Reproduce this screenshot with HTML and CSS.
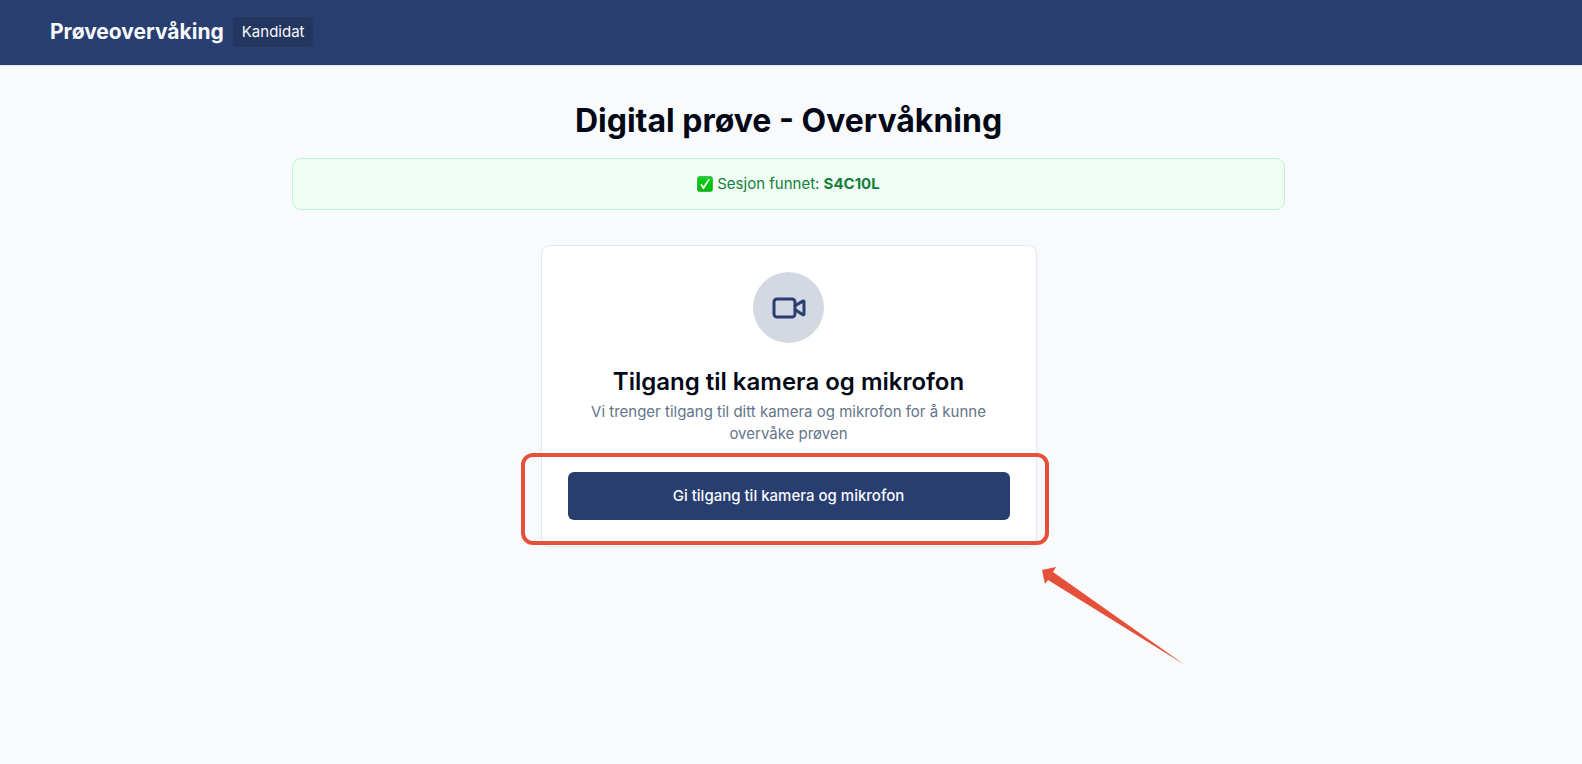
FILE: index.html
```html
<!DOCTYPE html>
<html lang="no">
<head>
  <meta charset="UTF-8">
  <title>Prøveovervåking</title>
  <meta name="viewport" content="width=device-width, initial-scale=1.0">
  <link rel="stylesheet" href="styles.css">
</head>
<body>
<header class="topbar">
  <a class="brand" href="#">Prøveovervåking</a>
  <span class="badge">Kandidat</span>
</header>

<main class="content">
  <h1 class="title">Digital prøve - Overvåkning</h1>

  <div class="alert">
    <svg class="check" viewBox="0 0 16 16" aria-hidden="true">
      <defs>
        <linearGradient id="green" x1="0" y1="0" x2="0" y2="1">
          <stop offset="0" stop-color="#25d33c"/>
          <stop offset="0.3" stop-color="#00c90b"/>
          <stop offset="1" stop-color="#00b90a"/>
        </linearGradient>
      </defs>
      <rect x="0.5" y="0.5" width="15" height="15" rx="2" fill="url(#green)" stroke="#1d9e2b" stroke-width="0.6"/>
      <path d="M3.2 8.6 4.7 7.8 6.5 10.3 11.4 2.9 12.9 3.2 6.9 13.2 6.1 13.2Z" fill="#fff"/>
    </svg>
    <p>Sesjon funnet: <strong>S4C10L</strong></p>
  </div>

  <section class="card">
    <div class="icon-circle">
      <svg class="video" viewBox="0 0 24 24" aria-hidden="true">
        <path d="m16 13 5.223 3.482a.5.5 0 0 0 .777-.416V7.870a.5.5 0 0 0-.752-.432L16 10.500"/>
        <rect x="2" y="6" width="14" height="12" rx="2"/>
      </svg>
    </div>
    <h2 class="card-title">Tilgang til kamera og mikrofon</h2>
    <p class="card-text">Vi trenger tilgang til ditt kamera og mikrofon for å kunne overvåke prøven</p>
    <div class="action">
      <button class="btn" type="button">Gi tilgang til kamera og mikrofon</button>
      <div class="highlight"></div>
      <svg class="arrow" viewBox="0 0 144 98" aria-hidden="true">
        <path d="M0 3 14 0 11 5 143 98 6 13 3 17Z"/>
      </svg>
    </div>
  </section>
</main>
</body>
</html>
```

FILE: styles.css
```css
* {
  box-sizing: border-box;
}
body {
  margin: 0;
  min-height: 100vh;
  font-family: Inter, sans-serif;
  font-size: 15px;
  line-height: 22px;
  color: #020817;
  background: #f9fafc;
}
h1, h2, p {
  margin: 0;
}
.topbar {
  display: flex;
  align-items: center;
  gap: 9px;
  height: 66px;
  padding: 0 50px 2px;
  background: #283e70;
  border-bottom: 1px solid #e2e8f0;
}
.brand {
  font-size: 21px;
  font-weight: 700;
  line-height: 32px;
  color: #f8fafc;
  text-decoration: none;
}
.badge {
  padding: 4px 9px;
  border-radius: 4px;
  background: #243660;
  color: #f8fafc;
}
.content {
  display: flex;
  flex-direction: column;
  align-items: center;
  padding: 35px 31px 35px 26px;
}
.title {
  margin-bottom: 17px;
  font-size: 32px;
  font-weight: 700;
  line-height: 40px;
  text-align: center;
}
.alert {
  display: flex;
  align-items: center;
  justify-content: center;
  gap: 4px;
  width: 100%;
  max-width: 993px;
  margin-bottom: 35px;
  padding: 14px;
  border: 1px solid #bbf7d0;
  border-radius: 9px;
  background: #f0fdf4;
  color: #15803d;
}
.check {
  width: 16px;
  height: 16px;
}
.card {
  display: flex;
  flex-direction: column;
  align-items: center;
  width: 100%;
  max-width: 496px;
  padding: 26px;
  border: 1px solid #e2e8f0;
  border-radius: 9px;
  background: #fff;
  box-shadow: 0 1px 2px rgba(0, 0, 0, 0.05);
  text-align: center;
}
.icon-circle {
  display: flex;
  align-items: center;
  justify-content: center;
  width: 71px;
  height: 71px;
  margin-bottom: 26px;
  border-radius: 50%;
  background: #d4d8e2;
}
.video {
  width: 36px;
  height: 36px;
  fill: none;
  stroke: #283e70;
  stroke-width: 2;
  stroke-linecap: round;
  stroke-linejoin: round;
}
.card-title {
  margin-bottom: 6px;
  font-size: 24px;
  font-weight: 600;
  line-height: 26px;
}
.card-text {
  padding: 0 18px;
  color: #64748b;
}
.action {
  position: relative;
  width: 100%;
  margin-top: 27px;
}
.btn {
  display: block;
  width: 100%;
  height: 48px;
  border: none;
  border-radius: 6px;
  background: #283e70;
  color: #f8fafc;
  font: inherit;
  font-weight: 500;
  cursor: pointer;
}
.btn:hover {
  background: #3a4f80;
}
/* red marker around the button */
.highlight {
  position: absolute;
  inset: -19px -39px -25px -47px;
  border: 4px solid #e5503a;
  border-radius: 12px;
  pointer-events: none;
}
.arrow {
  position: absolute;
  top: 95px;
  left: calc(100% + 32px);
  width: 144px;
  height: 98px;
  fill: #e5503a;
  pointer-events: none;
}
```
